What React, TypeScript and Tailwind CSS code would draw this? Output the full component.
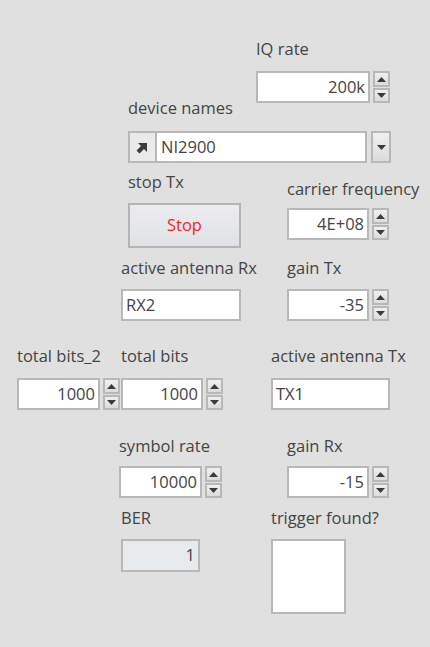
import React from 'react';

// LabVIEW-style front panel, laid out as rows of labelled controls

const Field = ({ label, gap = 'gap-[11px]', className = '', children }: { label: string; gap?: string; className?: string; children: React.ReactNode }) => (
    <div className={`flex flex-col ${gap} ${className}`}>
        <div className="h-[20px] text-[16.5px] leading-[20px] text-[#444] whitespace-nowrap">{label}</div>
        {children}
    </div>
);

const Arrow = ({ up }: { up?: boolean }) => (
    <svg width="9" height="5" viewBox="0 0 9 5">
        <path d={up ? 'M0 5 L4.5 0 L9 5 Z' : 'M0 0 L9 0 L4.5 5 Z'} fill="#3a3a3a" />
    </svg>
);

const Spinner = () => (
    <div className="flex flex-col gap-[1px] ml-[3px] h-[32px]">
        <div className="w-[17px] h-[16px] border-2 border-[#b8b8b8] bg-gradient-to-b from-[#f0f0f0] to-[#dcdcdc] flex items-center justify-center">
            <Arrow up />
        </div>
        <div className="w-[17px] h-[15px] border-2 border-[#b8b8b8] bg-gradient-to-b from-[#f0f0f0] to-[#dcdcdc] flex items-center justify-center">
            <Arrow />
        </div>
    </div>
);

const Numeric = ({ width, value }: { width: string; value: string }) => (
    <div className="flex items-start h-[32px]">
        <div className={`${width} h-[32px] border-2 border-[#b8b8b8] bg-white flex items-center justify-end pr-[3px] text-[16.5px] text-[#444]`}>
            {value}
        </div>
        <Spinner />
    </div>
);

const TextBox = ({ width, value }: { width: string; value: string }) => (
    <div className={`${width} h-[32px] border-2 border-[#b8b8b8] bg-white flex items-center pl-[3px] text-[16.5px] text-[#444]`}>
        {value}
    </div>
);

export default function App() {
    return (
        <div className="w-[430px] h-[647px] bg-[#e0e0e0] overflow-hidden pt-[39px] font-['Segoe_UI','Open_Sans','Noto_Sans',sans-serif]">
            {/* IQ rate */}
            <div className="flex pl-[256px]">
                <Field label="IQ rate" gap="gap-[12px]">
                    <Numeric width="w-[114px]" value="200k" />
                </Field>
            </div>

            {/* device names */}
            <div className="flex pl-[128px] -mt-[5px]">
                <Field label="device names" gap="gap-[13px]">
                    <div className="flex">
                        <div className="w-[29px] h-[32px] border-2 border-[#b8b8b8] bg-[#e8eaec] flex items-center justify-center">
                            <svg width="14" height="14" viewBox="0 0 14 14">
                                <path d="M2 3 L11 3 L11 12 L8 9 L3.5 13.5 L0.5 10.5 L5 6 Z" fill="#3c3c3c" />
                            </svg>
                        </div>
                        <div className="w-[210px] h-[32px] border-2 border-l-0 border-[#b8b8b8] bg-white flex items-center pl-[4px] text-[16.5px] text-[#444]">
                            NI2900
                        </div>
                        <div className="w-[20px] h-[32px] ml-[4px] border-2 border-[#b8b8b8] bg-gradient-to-b from-[#f0f0f0] to-[#dcdcdc] flex items-center justify-center">
                            <Arrow />
                        </div>
                    </div>
                </Field>
            </div>

            {/* stop Tx / carrier frequency */}
            <div className="flex items-start pl-[128px] mt-[9px]">
                <Field label="stop Tx" className="w-[159px]">
                    <div className="w-[113px] h-[45px] border-2 border-[#b4b4b4] bg-gradient-to-b from-[#ececee] to-[#dfe2e5] flex items-center justify-center text-[16.5px] text-[#ff1a1a]">
                        Stop
                    </div>
                </Field>
                <Field label="carrier frequency" gap="gap-[9px]" className="pt-[7px]">
                    <Numeric width="w-[82px]" value="4E+08" />
                </Field>
            </div>

            {/* active antenna Rx / gain Tx */}
            <div className="flex items-start pl-[121px] mt-[10px]">
                <Field label="active antenna Rx" className="w-[166px]">
                    <TextBox width="w-[120px]" value="RX2" />
                </Field>
                <Field label="gain Tx">
                    <Numeric width="w-[82px]" value="-35" />
                </Field>
            </div>

            {/* total bits_2 / total bits / active antenna Tx */}
            <div className="flex items-start pl-[17px] mt-[25px]">
                <Field label="total bits_2" gap="gap-[12px]" className="w-[104px]">
                    <Numeric width="w-[83px]" value="1000" />
                </Field>
                <Field label="total bits" gap="gap-[12px]" className="w-[150px]">
                    <Numeric width="w-[82px]" value="1000" />
                </Field>
                <Field label="active antenna Tx" gap="gap-[12px]">
                    <TextBox width="w-[119px]" value="TX1" />
                </Field>
            </div>

            {/* symbol rate / gain Rx */}
            <div className="flex items-start pl-[119px] mt-[26px]">
                <Field label="symbol rate" gap="gap-[10px]" className="w-[168px]">
                    <Numeric width="w-[83px]" value="10000" />
                </Field>
                <Field label="gain Rx" gap="gap-[10px]">
                    <Numeric width="w-[82px]" value="-15" />
                </Field>
            </div>

            {/* BER / trigger found? */}
            <div className="flex items-start pl-[121px] mt-[10px]">
                <Field label="BER" className="w-[150px]">
                    <div className="w-[79px] h-[33px] border-2 border-[#b8b8b8] bg-[#e8ebee] flex items-center justify-end pr-[3px] text-[16.5px] text-[#444]">
                        1
                    </div>
                </Field>
                <Field label="trigger found?">
                    <div className="w-[75px] h-[75px] border-2 border-[#b8b8b8] bg-white" />
                </Field>
            </div>
        </div>
    );
}
